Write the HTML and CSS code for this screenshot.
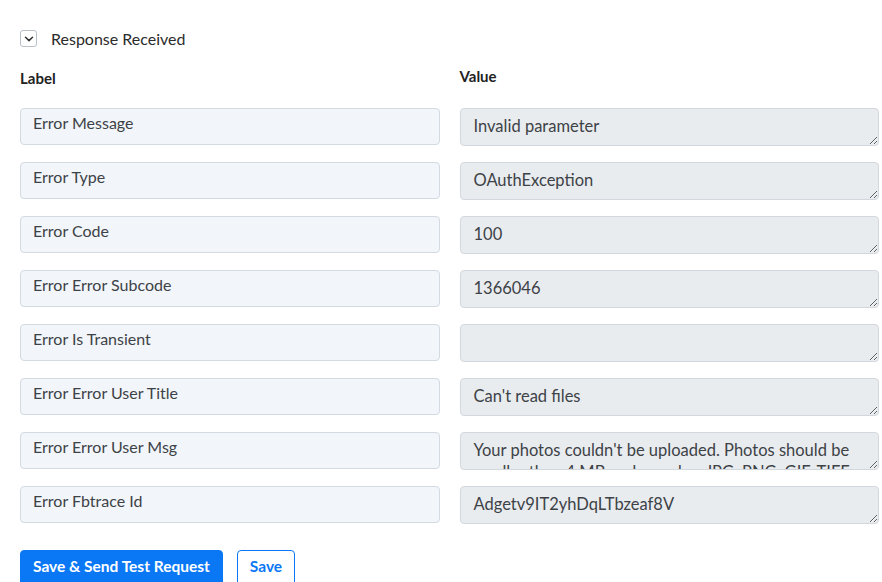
FILE: index.html
```html
<!DOCTYPE html>
<html>
<head>
<meta charset="utf-8">
<link rel="stylesheet" href="styles.css">
</head>
<body>
<div class="page">
  <div class="toggle-row">
    <span class="toggle">
      <svg width="10" height="6" viewBox="0 0 10 6"><path d="M1.5 1.2 L5 4.6 L8.5 1.2" fill="none" stroke="#333" stroke-width="1.5" stroke-linecap="round" stroke-linejoin="round"/></svg>
    </span>
    <span class="toggle-text">Response Received</span>
  </div>
  <div class="grid">
    <div class="head head-label">Label</div>
    <div class="head head-value">Value</div>

    <input class="label-input" value="Error Message">
    <textarea class="value-input">Invalid parameter</textarea>

    <input class="label-input" value="Error Type">
    <textarea class="value-input">OAuthException</textarea>

    <input class="label-input" value="Error Code">
    <textarea class="value-input">100</textarea>

    <input class="label-input" value="Error Error Subcode">
    <textarea class="value-input">1366046</textarea>

    <input class="label-input" value="Error Is Transient">
    <textarea class="value-input"></textarea>

    <input class="label-input" value="Error Error User Title">
    <textarea class="value-input">Can't read files</textarea>

    <input class="label-input" value="Error Error User Msg">
    <textarea class="value-input">Your photos couldn't be uploaded. Photos should be smaller than 4 MB and saved as JPG, PNG, GIF, TIFF, HEIF or WebP files.</textarea>

    <input class="label-input" value="Error Fbtrace Id">
    <textarea class="value-input">Adgetv9IT2yhDqLTbzeaf8V</textarea>
  </div>
  <div class="actions">
    <button class="btn btn-primary">Save &amp; Send Test Request</button>
    <button class="btn btn-outline">Save</button>
  </div>
</div>
</body>
</html>
```

FILE: styles.css
```css
html, body {
  margin: 0;
  padding: 0;
  background: #ffffff;
}
body {
  font-family: "Lato", "Liberation Sans", sans-serif;
  color: #333;
  overflow: hidden;
}
.page {
  padding: 30px 3px 0 20px;
}
.toggle-row {
  display: flex;
  align-items: center;
  height: 17px;
}
.toggle {
  width: 15px;
  height: 15px;
  border: 1px solid #b9c0c8;
  border-radius: 3px;
  display: flex;
  align-items: center;
  justify-content: center;
  box-sizing: content-box;
}
.toggle-text {
  margin-left: 14px;
  font-size: 16px;
  color: #2b2b2b;
}
.grid {
  display: grid;
  grid-template-columns: 1fr 1fr;
  column-gap: 20px;
  row-gap: 16px;
  margin-top: 22px;
}
.head {
  font-size: 15px;
  font-weight: 700;
  color: #222;
  height: 23px;
  line-height: 18px;
}
.head-value {
  margin-top: -2px;
}
.label-input,
.value-input {
  box-sizing: border-box;
  width: 100%;
  margin: 0;
  font-family: "Lato", "Liberation Sans", sans-serif;
  font-size: 16px;
  color: #3d4247;
  border-radius: 4px;
  outline: none;
}
.label-input {
  height: 37px;
  border: 1px solid #d3dae2;
  background: #f2f6fa;
  padding: 0 12px 8px;
}
.value-input {
  height: 38px;
  border: 1px solid #d3d8de;
  background: #e9ecef;
  padding: 6px 13px 6px;
  font-size: 16.5px;
  line-height: 22px;
  resize: vertical;
  overflow: hidden;
  display: block;
}
.actions {
  display: flex;
  gap: 14px;
  margin-top: 26px;
}
.btn {
  font-family: "Lato", "Liberation Sans", sans-serif;
  font-size: 15.5px;
  font-weight: 700;
  height: 38px;
  border-radius: 4px;
  padding: 0 12px 6px;
  cursor: pointer;
}
.btn-primary {
  background: #0a78f5;
  color: #fff;
  border: 1px solid #0a78f5;
}
.btn-outline {
  background: #fff;
  color: #0a78f5;
  border: 1px solid #0a78f5;
}
```
